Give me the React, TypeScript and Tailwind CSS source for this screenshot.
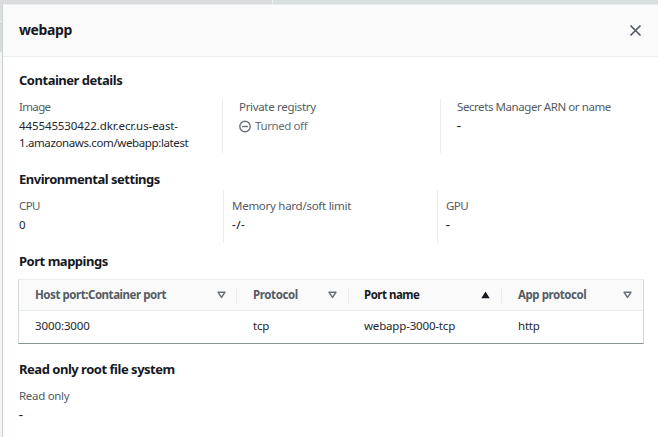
import type { ReactNode } from 'react';

function Heading({ children, className = '' }: { children: ReactNode; className?: string }) {
  return (
    <h3 className={`h-5 whitespace-nowrap text-[13px] font-bold tracking-[-0.48px] text-[#16191f] ${className}`}>
      <span>{children}</span>
    </h3>
  );
}

function Field({ label, labelClass = '', children }: { label: string; labelClass?: string; children: ReactNode }) {
  return (
    <div>
      <div className={`mb-px h-[17px] whitespace-nowrap leading-[15px] text-[#545b64] ${labelClass}`}>
        <span>{label}</span>
      </div>
      <div className="leading-[17px]">{children}</div>
    </div>
  );
}

function Sort({ active = false }: { active?: boolean }) {
  return active ? (
    <svg width="9" height="8" viewBox="0 0 9 8" className="shrink-0">
      <path d="M4.5 .5 8.7 7.2H.3Z" fill="#16191f" />
    </svg>
  ) : (
    <svg width="9" height="8" viewBox="0 0 9 8" className="shrink-0">
      <path d="M1.1 1.3H7.9L4.5 6.4Z" fill="none" stroke="#687078" strokeWidth="1.5" strokeLinejoin="round" />
    </svg>
  );
}

export default function App() {
  return (
    <div className="flex h-[437px] w-[658px] flex-col overflow-hidden bg-white font-['Noto_Sans',sans-serif] text-[11.5px] text-[#24272d]">
      <div className="flex h-1 shrink-0">
        <div className="w-[272px] bg-[#d9dbdc]" />
        <div className="w-px bg-[#eaeded]" />
        <div className="grow bg-[#d9dedf]" />
      </div>
      <div className="flex grow">
        <div className="flex w-[2px] shrink-0 flex-col bg-[#f2f3f3]">
          <div className="h-[17px] bg-[#dcdfdf]" />
          <div className="mt-px h-[30px] bg-[#d5dbdb]" />
        </div>
        <main className="w-[656px] border-l border-t border-l-[#ccd2d3] border-t-[#eaeded] pb-2">
          <header className="flex h-[52px] items-center justify-between border-b border-[#eaeded] bg-[#fafafa] px-4">
            <h2 className="-mt-0.5 text-[14px] font-bold leading-5 tracking-[-0.4px] text-[#16191f]">
              <span>webapp</span>
            </h2>
            <svg width="13" height="13" viewBox="0 0 13 13">
              <path d="m1.5 1.5 10 10m0-10-10 10" stroke="#545b64" strokeWidth="1.7" />
            </svg>
          </header>
          <div className="pl-4 pr-[14px] pt-[13px]">
            <Heading className="leading-5">Container details</Heading>
            <div className="mt-[9px] flex h-[54px]">
              <div className="w-[203px]">
                <Field label="Image" labelClass="tracking-[-0.65px]">
                  <span className="tracking-[-0.1px]">445545530422.dkr.ecr.us-east-</span>
                  <br />
                  <span className="tracking-[-0.38px]">1.amazonaws.com/webapp:latest</span>
                </Field>
              </div>
              <div className="w-[218px] border-l border-[#eaeded] pl-4">
                <Field label="Private registry" labelClass="tracking-[-0.32px]">
                  <div className="flex items-center gap-1 text-[#687078]">
                    <svg width="12" height="13" viewBox="0 0 12 13" className="mt-px">
                      <circle cx="6" cy="6.5" r="5.2" fill="none" stroke="#687078" strokeWidth="1.4" />
                      <path d="M3 6.5h6" stroke="#687078" strokeWidth="1.4" />
                    </svg>
                    <span className="tracking-[-0.4px]">Turned off</span>
                  </div>
                </Field>
              </div>
              <div className="border-l border-[#eaeded] pl-4">
                <Field label="Secrets Manager ARN or name" labelClass="tracking-[-0.43px]">
                  <span className="inline-block scale-x-125 font-medium">-</span>
                </Field>
              </div>
            </div>

            <Heading className="mt-[17px] leading-[18px]">Environmental settings</Heading>
            <div className="flex h-[53px]">
              <div className="w-[204px] pt-2">
                <Field label="CPU" labelClass="tracking-[-0.6px]">0</Field>
              </div>
              <div className="w-[214px] border-l border-[#eaeded] pl-2 pt-2">
                <Field label="Memory hard/soft limit" labelClass="tracking-[-0.27px]">
                  <span className="font-medium tracking-[0.5px]">-/-</span>
                </Field>
              </div>
              <div className="border-l border-[#eaeded] pl-2 pt-2">
                <Field label="GPU" labelClass="tracking-[-0.5px]">
                  <span className="inline-block scale-x-125 font-medium">-</span>
                </Field>
              </div>
            </div>

            <Heading className="mt-[9px] leading-[18px]">Port mappings</Heading>
            <div className="-ml-px mt-[7px] h-[65px] w-[626px] border border-[#d5dbdb] border-b-[#879596] border-t-[#eaeded]">
              <div className="flex h-[31px] items-center border-b border-[#eaeded] bg-[#fafafa] font-bold text-[#545b64]">
                <div className="flex w-[217px] items-center justify-between pl-4 pr-[10px]">
                  <span className="tracking-[-0.46px]">Host port:Container port</span>
                  <Sort />
                </div>
                <div className="flex h-4 w-[112px] items-center justify-between border-l border-[#eaeded] pl-4 pr-[11px]">
                  <span className="tracking-[-0.4px]">Protocol</span>
                  <Sort />
                </div>
                <div className="flex h-4 w-[153px] items-center justify-between border-l border-[#eaeded] pl-[15px] pr-[11px] text-[#16191f]">
                  <span className="tracking-[-0.5px]">Port name</span>
                  <Sort active />
                </div>
                <div className="flex h-4 grow items-center justify-between border-l border-[#eaeded] pl-4 pr-[11px]">
                  <span className="tracking-[-0.45px]">App protocol</span>
                  <Sort />
                </div>
              </div>
              <div className="flex h-[30px] items-center">
                <span className="w-[218px] pl-4 tracking-[-0.1px]">3000:3000</span>
                <span className="w-[111px] pl-4 tracking-[-0.2px]">tcp</span>
                <span className="w-[153px] pl-4 tracking-[-0.17px]">webapp-3000-tcp</span>
                <span className="pl-[17px] tracking-[-0.2px]">http</span>
              </div>
            </div>

            <Heading className="mt-4 leading-[18px]">Read only root file system</Heading>
            <div className="mt-2">
              <Field label="Read only" labelClass="tracking-[-0.3px]">
                <span className="inline-block scale-x-125 font-medium">-</span>
              </Field>
            </div>
          </div>
        </main>
      </div>
    </div>
  );
}
